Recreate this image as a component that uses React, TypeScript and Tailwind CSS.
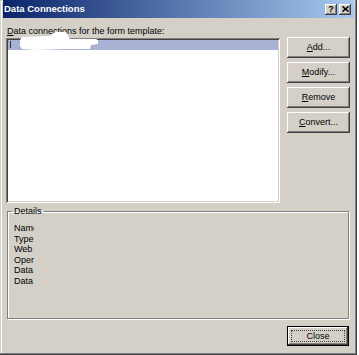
import React from "react";

const F = "font-['Liberation_Sans',Arial,sans-serif]";
const raised =
  "shadow-[inset_-1px_-1px_#404040,inset_1px_1px_#ffffff,inset_-2px_-2px_#808080,inset_2px_2px_#d4d0c8]";

function Btn({ pre, u, post }: { pre?: string; u?: string; post?: string }) {
  return (
    <div
      className={`h-[21px] w-[63px] bg-[#d4d0c8] ${raised} flex items-center justify-center text-[9px] leading-[11px] text-black`}
    >
      <span>
        {pre}
        {u && <span className="underline underline-offset-[1px]">{u}</span>}
        {post}
      </span>
    </div>
  );
}

export default function App() {
  const details = [
    "Name:",
    "Type:",
    "Web service:",
    "Operation:",
    "Data source:",
    "Data connection:",
  ];
  return (
    <div className={`w-[359px] h-[355px] bg-white ${F}`}>
      <div className="w-[357px] h-[355px] bg-[#d4d0c8] shadow-[inset_-1px_-1px_#404040,inset_-2px_-2px_#808080,inset_1px_1px_#d4d0c8,inset_2px_2px_#ffffff] px-[3px] flex flex-col relative">
        {/* title bar */}
        <div className="h-[18px] bg-[linear-gradient(to_right,#0a246a,#a6caf0)] flex items-center justify-between pl-[1px] pr-[3px]">
          <span className="text-white font-bold text-[9.5px] leading-[12px]">Data Connections</span>
          <div className="flex gap-[2px]">
            <div className={`w-[12px] h-[11px] bg-[#d4d0c8] ${raised} flex items-center justify-center text-[9px] font-bold leading-[9px] text-black`}>
              ?
            </div>
            <div className={`w-[12px] h-[11px] bg-[#d4d0c8] ${raised} flex items-center justify-center`}>
              <svg width="7" height="6" viewBox="0 0 7 6">
                <path d="M0.5 0.5 L6.5 5.5 M6.5 0.5 L0.5 5.5" stroke="#000" strokeWidth="1.6" />
              </svg>
            </div>
          </div>
        </div>

        {/* body */}
        <div className="flex pl-[3px] mt-[7px]">
          <div className="w-[274px] flex flex-col">
            <div className="h-[13px] leading-[13px] text-[9px] pl-[1px] text-black">
              <span className="underline underline-offset-[1px]">D</span>ata connections for the form template:
            </div>
            <div className="h-[165px] bg-white shadow-[inset_1px_1px_#808080,inset_-1px_-1px_#ffffff,inset_2px_2px_#404040,inset_-2px_-2px_#d4d0c8] p-[2px] relative">
              <div className="h-[10px] bg-[#a9b2d5] relative">
                <div className="absolute left-[2px] top-[1px] w-[1px] h-[7px] bg-[#333]" />
              </div>
              <svg className="absolute left-0 top-[-8px]" width="100" height="22" viewBox="0 0 100 22">
                <path
                  d="M14 10 L16 7 L44 6 L48 3 L50 2 L60 2 L62 6 L64 9 L90 9 L92 10 L92 14 L85 15 L84 19 L60 19 L30 20 L16 19 L14 16 Z"
                  fill="#ffffff"
                />
              </svg>
            </div>
          </div>
          <div className="ml-[7px] pt-[12px] flex flex-col gap-[4px]">
            <Btn u="A" post="dd..." />
            <Btn u="M" post="odify..." />
            <Btn u="R" post="emove" />
            <Btn u="C" post="onvert..." />
          </div>
        </div>

        {/* details group */}
        <fieldset className="ml-[4px] mt-[3px] w-[342px] h-[113px] border border-[#808080] shadow-[inset_1px_1px_#ffffff,1px_1px_#ffffff] px-0">
          <legend className="ml-[4px] px-[2px] text-[9px] leading-[11px] text-black">Details</legend>
          <div className="pl-[6px] mt-[6px] flex flex-col">
            {details.map((d) => (
              <div key={d} className="w-[20px] overflow-hidden whitespace-nowrap text-[9px] leading-[10.6px] text-black">
                {d}
              </div>
            ))}
          </div>
        </fieldset>

        {/* close */}
        <div className="flex justify-end pr-[5px] mt-[7px]">
          <div className="w-[62px] h-[20px] border border-black">
            <div className={`w-full h-full bg-[#d4d0c8] ${raised} p-[3px]`}>
              <div className="w-full h-full border border-dotted border-[#404040] flex items-center justify-center text-[9px] leading-[11px] text-black">
                Close
              </div>
            </div>
          </div>
        </div>
      </div>
    </div>
  );
}
